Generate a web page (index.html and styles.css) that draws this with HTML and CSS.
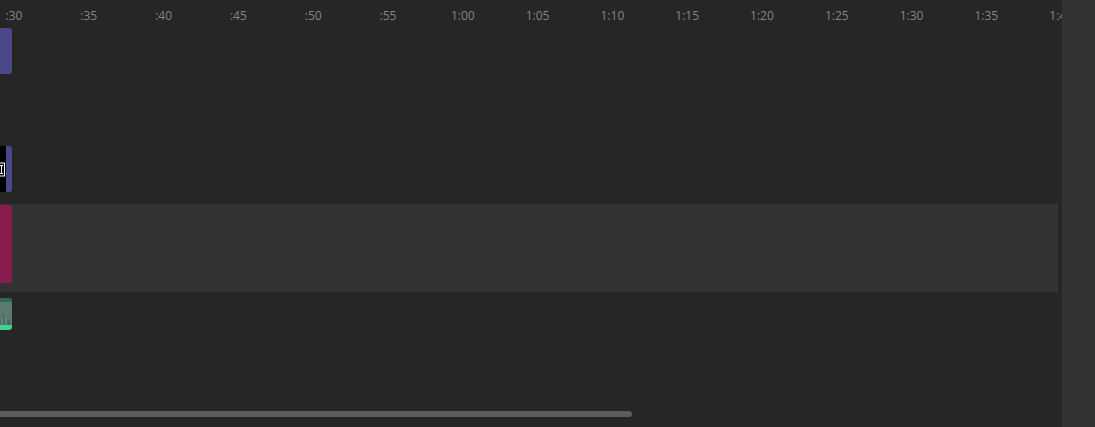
FILE: index.html
```html
<!DOCTYPE html>
<html>
<head>
<meta charset="utf-8">
<link rel="stylesheet" href="styles.css">
</head>
<body>
<div class="app">
  <div class="timeline">
    <div class="ruler">
      <div class="ticks">
        <span class="tick">:30</span><span class="tick">:35</span><span class="tick">:40</span><span class="tick">:45</span><span class="tick">:50</span><span class="tick">:55</span><span class="tick">1:00</span><span class="tick">1:05</span><span class="tick">1:10</span><span class="tick">1:15</span><span class="tick">1:20</span><span class="tick">1:25</span><span class="tick">1:30</span><span class="tick">1:35</span><span class="tick">1:40</span>
      </div>
    </div>
    <div class="tracks">
      <div class="track track-a">
        <div class="clip clip-purple"></div>
      </div>
      <div class="track track-b">
        <div class="clip clip-video">
          <div class="thumb">
            <svg width="6" height="17" viewBox="0 0 6 17">
              <rect x="0" y="0" width="6" height="17" fill="#000"/>
              <rect x="-1" y="1.5" width="6" height="14" fill="#fff"/>
              <rect x="0" y="2.5" width="4" height="12" fill="#000"/>
              <rect x="0" y="4" width="3" height="1" fill="#fff"/>
              <rect x="1" y="5" width="1" height="7" fill="#fff"/>
              <rect x="0" y="12" width="3" height="1" fill="#fff"/>
            </svg>
          </div>
        </div>
      </div>
      <div class="track track-c">
        <div class="clip clip-magenta"></div>
      </div>
      <div class="track track-d">
        <div class="clip clip-audio">
          <svg class="wave" width="12" height="20" viewBox="0 0 12 20">
            <path d="M0 20 L1 10 L2 16 L3 7 L4 15 L5 9 L6 18 L7 11 L8 17 L9 13 L10 19 L12 20 Z" fill="#46665d"/>
            <path d="M1 20 L2 13 L3 20 M5 20 L6 12 L7 20" stroke="#7d9a91" stroke-width="0.6" fill="none"/>
          </svg>
        </div>
      </div>
    </div>
    <div class="hscroll"><div class="thumb-bar"></div></div>
  </div>
  <div class="side"></div>
</div>
</body>
</html>
```
FILE: styles.css
```css
html, body {
  margin: 0;
  padding: 0;
  background: #262626;
  overflow: hidden;
}
.app {
  display: flex;
  width: 1095px;
  height: 427px;
  font-family: "Open Sans", "Liberation Sans", sans-serif;
}
.timeline {
  position: relative;
  width: 1062px;
  height: 427px;
  overflow: hidden;
  display: flex;
  flex-direction: column;
}
.side {
  width: 33px;
  height: 427px;
  background: #333333;
}
.ruler {
  height: 28px;
  overflow: hidden;
}
.ticks {
  display: flex;
  margin-left: -23.4px;
  padding-top: 7px;
}
.tick {
  flex: 0 0 74.8px;
  text-align: center;
  font-size: 12px;
  line-height: 17px;
  color: #858585;
  white-space: nowrap;
}
.tracks {
  display: flex;
  flex-direction: column;
  width: 1058px;
}
.track {
  position: relative;
}
.track-a {
  height: 118px;
}
.track-b {
  height: 58px;
}
.track-c {
  height: 87px;
  background: #333333;
  padding-top: 1px;
}
.track-d {
  height: 60px;
  padding-top: 6px;
}
.clip {
  width: 12px;
  border-radius: 0 3px 3px 0;
  overflow: hidden;
}
.clip-purple {
  height: 46px;
  background: #4b4889;
}
.clip-video {
  height: 46px;
  background: #4b4889;
  display: flex;
}
.thumb {
  width: 6px;
  height: 46px;
  background: #000;
  display: flex;
  align-items: center;
}
.thumb svg {
  display: block;
}
.clip-magenta {
  height: 78px;
  background: #8a1c4f;
}
.clip-audio {
  height: 32px;
  background: #5b7b72;
  border-top: 4px solid #2d6a58;
  border-bottom: 5px solid #3ed393;
  box-sizing: border-box;
  display: flex;
  align-items: flex-end;
}
.wave {
  display: block;
}
.hscroll {
  position: absolute;
  left: 0;
  top: 411px;
  width: 1058px;
  height: 6px;
}
.thumb-bar {
  width: 632px;
  height: 6px;
  border-radius: 0 3px 3px 0;
  background: #5c5c5c;
}
```
